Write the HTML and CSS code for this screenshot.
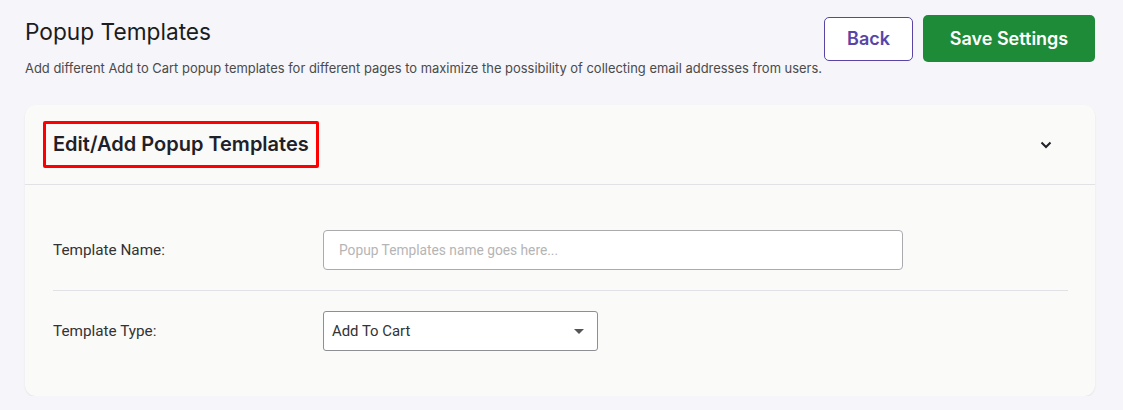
FILE: index.html
```html
<!DOCTYPE html>
<html>
<head>
<meta charset="utf-8">
<link rel="stylesheet" href="styles.css">
</head>
<body>
<div class="page">
  <header class="top">
    <div class="intro">
      <h1 class="title">Popup Templates</h1>
      <p class="subtitle">Add different Add to Cart popup templates for different pages to maximize the possibility of collecting email addresses from users.</p>
    </div>
    <div class="actions">
      <button class="btn btn-back">Back</button>
      <button class="btn btn-save">Save Settings</button>
    </div>
  </header>

  <section class="card">
    <div class="card-head">
      <h2 class="card-title">Edit/Add Popup Templates</h2>
      <svg class="chev" width="12" height="8" viewBox="0 0 12 8"><path d="M1.5 1.5 L6 6 L10.5 1.5" fill="none" stroke="#1f2128" stroke-width="2"/></svg>
    </div>
    <div class="card-body">
      <div class="row">
        <label class="label">Template Name:</label>
        <div class="field"><input class="input" type="text" placeholder="Popup Templates name goes here..."></div>
      </div>
      <div class="row">
        <label class="label">Template Type:</label>
        <div class="field">
          <div class="select">
            <span>Add To Cart</span>
            <svg width="10" height="5" viewBox="0 0 10 5"><path d="M0 0 L10 0 L5 5 Z" fill="#555"/></svg>
          </div>
        </div>
      </div>
    </div>
  </section>
</div>
</body>
</html>
```

FILE: styles.css
```css
* { box-sizing: border-box; }
html, body { margin: 0; padding: 0; }
body {
  background: #f5f5fa;
  font-family: Inter, "Noto Sans", sans-serif;
  color: #222;
}
.page {
  padding: 15px 28px 0 25px;
}
.top {
  display: flex;
  justify-content: space-between;
  align-items: flex-start;
  height: 90px;
}
.title {
  margin: 2px 0 0 0;
  font-size: 22.7px;
  line-height: 30px;
  font-weight: 400;
  color: #1c1c1c;
}
.subtitle {
  margin: 13px 0 0 0;
  font-size: 12.95px;
  line-height: 16px;
  color: #4a4a4a;
}
.actions {
  display: flex;
  align-items: center;
  gap: 10px;
  height: 47px;
}
.btn {
  font-family: Inter, "Noto Sans", sans-serif;
  font-size: 18px;
  font-weight: 600;
  border-radius: 5px;
  cursor: pointer;
}
.btn-back {
  width: 89px;
  height: 44px;
  background: #fff;
  border: 1px solid #5a45a6;
  color: #5a45a6;
}
.btn-save {
  width: 172px;
  height: 47px;
  background: #1d8b37;
  border: none;
  color: #fff;
}
.card {
  background: #fafaf9;
  border-radius: 11px;
  box-shadow: 0 1px 2px rgba(0,0,0,0.08);
}
.card-head {
  display: flex;
  align-items: center;
  justify-content: space-between;
  height: 80px;
  padding: 0 43px 0 18px;
  border-bottom: 1px solid #e2e2e6;
}
.card-title {
  margin: 0;
  font-size: 20px;
  font-weight: 600;
  color: #1f2128;
  border: 3px solid #f00;
  border-radius: 2px;
  padding: 0 7px;
  height: 47px;
  line-height: 41px;
}
.card-body {
  padding: 45px 27px 45px 28px;
}
.row {
  display: grid;
  grid-template-columns: 270px 1fr;
  align-items: center;
}
.row + .row {
  border-top: 1px solid #e2e2e6;
  margin-top: 20px;
  padding-top: 20px;
}
.label {
  font-family: Roboto, sans-serif;
  font-size: 15.3px;
  color: #333;
}
.input {
  width: 580px;
  height: 40px;
  border: 1px solid #a9abae;
  border-radius: 4px;
  background: #fff;
  padding: 0 15px;
  font-family: Roboto, sans-serif;
  font-size: 13.75px;
  outline: none;
}
.input::placeholder { color: #b5b5b5; }
.select {
  width: 275px;
  height: 40px;
  border: 1px solid #8d8f93;
  border-radius: 3px;
  background: #fff;
  display: flex;
  align-items: center;
  justify-content: space-between;
  padding: 0 13px 0 8px;
  font-family: Roboto, sans-serif;
  font-size: 14.9px;
  color: #333;
}
```
